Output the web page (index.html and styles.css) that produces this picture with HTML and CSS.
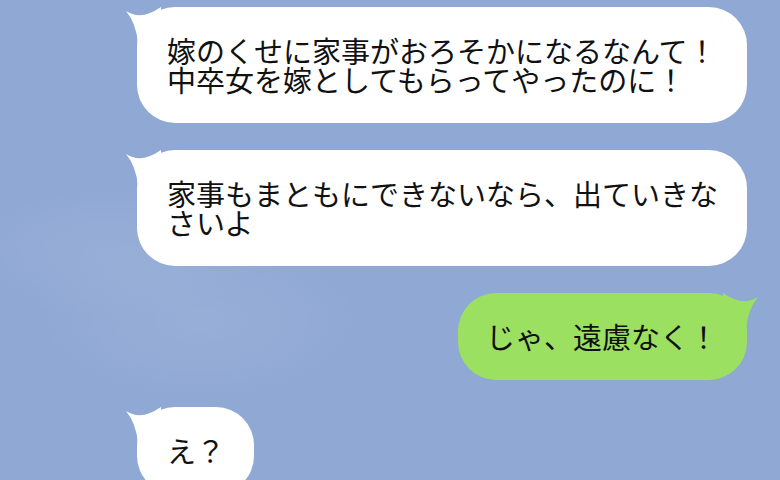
FILE: index.html
```html
<!DOCTYPE html>
<html lang="ja">
<head>
    <meta charset="UTF-8">
    <meta name="viewport" content="width=device-width, initial-scale=1.0">
    <title>トーク</title>
    <link rel="stylesheet" href="styles.css">
</head>
<body>
    <div class="chat">
        <div class="msg left">
            <div class="bubble">
                <svg class="tail" viewBox="-12 0 36 36" width="36" height="36"><path d="M-11 4 Q4 14 24 0 L24 36 L1 36 Q-1 16 -11 4 Z"/></svg>
                嫁のくせに家事がおろそかになるなんて！中卒女を嫁としてもらってやったのに！
            </div>
        </div>
        <div class="msg left">
            <div class="bubble">
                <svg class="tail" viewBox="-12 0 36 36" width="36" height="36"><path d="M-11 4 Q4 14 24 0 L24 36 L1 36 Q-1 16 -11 4 Z"/></svg>
                家事もまともにできないなら、出ていきなさいよ
            </div>
        </div>
        <div class="msg right">
            <div class="bubble green">
                <svg class="tail" viewBox="-12 0 36 36" width="36" height="36"><path d="M-11 4 Q4 14 24 0 L24 36 L1 36 Q-1 16 -11 4 Z"/></svg>
                じゃ、遠慮なく！
            </div>
        </div>
        <div class="msg left">
            <div class="bubble">
                <svg class="tail" viewBox="-12 0 36 36" width="36" height="36"><path d="M-11 4 Q4 14 24 0 L24 36 L1 36 Q-1 16 -11 4 Z"/></svg>
                え？
            </div>
        </div>
    </div>
</body>
</html>
```

FILE: styles.css
```css
html, body {
    margin: 0;
    height: 100%;
    overflow: hidden;
}
body {
    font-family: "Noto Sans CJK JP", "Noto Sans", sans-serif;
    background-color: #8fa8d4;
    background-image:
        radial-gradient(ellipse 160px 70px at 110px 250px, rgba(255, 255, 255, 0.07), transparent),
        radial-gradient(ellipse 180px 90px at 200px 320px, rgba(255, 255, 255, 0.08), transparent);
    color: #111;
}
.chat {
    display: flex;
    flex-direction: column;
    gap: 27px;
    padding: 7px 33px 0 137px;
}
.msg.left {
    align-self: flex-start;
}
.msg.right {
    align-self: flex-end;
}
.bubble {
    position: relative;
    max-width: 552px;
    padding: 29px 29px 29px 30px;
    border-radius: 38px;
    background-color: #fff;
    font-size: 29px;
    line-height: 29px;
}
.bubble.green {
    background-color: #9ce062;
    padding-left: 28px;
}
.tail {
    position: absolute;
    top: 0;
    left: -12px;
    fill: #fff;
}
.green .tail {
    left: auto;
    right: -12px;
    transform: scaleX(-1);
    fill: #9ce062;
}
```
